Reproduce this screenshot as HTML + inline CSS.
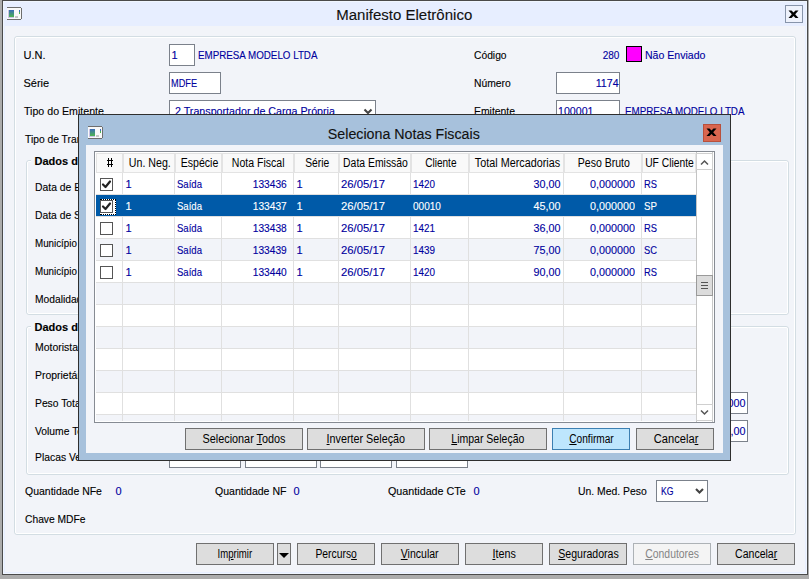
<!DOCTYPE html>
<html><head><meta charset="utf-8"><style>
html,body{margin:0;padding:0;}
body{width:809px;height:579px;overflow:hidden;position:relative;background:#acacac;font-family:"Liberation Sans",sans-serif;}
.r{position:absolute;box-sizing:border-box;}
.t{position:absolute;white-space:nowrap;font-family:"Liberation Sans",sans-serif;-webkit-text-stroke:0.12px currentColor;}
u{text-decoration:underline;text-underline-offset:1px;}
</style></head><body>
<div class="r" style="left:0px;top:0px;width:809px;height:579px;background:#acacac;"></div>
<div class="r" style="left:2px;top:0px;width:806px;height:575px;background:#4a4a4a;"></div>
<div class="r" style="left:3px;top:1px;width:804px;height:573px;background:#f0f6ff;"></div>
<div class="r" style="left:4px;top:2px;width:802px;height:571px;background:#e7eeff;"></div>
<div class="r" style="left:5px;top:26px;width:800px;height:546px;background:#f2f4f9;"></div>
<svg class="r" style="left:7px;top:7px" width="15" height="13" viewBox="0 0 15 13" shape-rendering="crispEdges"><defs><linearGradient id="ig" x1="0" y1="0" x2="0" y2="1"><stop offset="0" stop-color="#3b6bb8"/><stop offset="1" stop-color="#4db54f"/></linearGradient></defs><rect x="0" y="1" width="14" height="11" fill="#f9f9f9"/><rect x="0" y="0" width="14" height="1" fill="#6e6e6e"/><rect x="0" y="12" width="14" height="1" fill="#6e6e6e"/><rect x="14" y="1" width="1" height="11" fill="#6e6e6e"/><rect x="1" y="3" width="6" height="8" fill="#c9c3e6"/><rect x="2" y="3" width="5" height="7" fill="url(#ig)"/><rect x="12" y="3" width="1" height="2" fill="#3b6bb8"/><rect x="12" y="5" width="1" height="2" fill="#4db54f"/><rect x="8" y="9" width="3" height="2" fill="#c8c8c8"/></svg>
<div class="t" style="left:334.27px;top:6px;width:142.47px;font-size:15.50px;line-height:17px;color:#111;transform:scaleX(0.9682);transform-origin:center top;">Manifesto Eletrônico</div>
<div class="r" style="left:785px;top:5px;width:18px;height:18px;background:#eef2fc;border:1px solid #8794aa;"></div>
<svg class="r" style="left:788px;top:10px" width="11" height="9" viewBox="0 0 11 9"><path d="M0.5 0.5 H3.5 L5.5 2.6 L7.5 0.5 H10.5 L7.2 4.3 L10.5 8 H7.5 L5.5 5.9 L3.5 8 H0.5 L3.8 4.3 Z" fill="#000"/></svg>
<div class="r" style="left:14px;top:36px;width:782px;height:499px;border:1px solid #d3dde3;border-radius:3px;"></div>
<div class="r" style="left:15px;top:37px;width:780px;height:497px;border:1px solid #ffffff;border-radius:2px;"></div>
<div class="r" style="left:26px;top:160px;width:763px;height:155px;border:1px solid #d3dde3;border-radius:3px;"></div>
<div class="r" style="left:27px;top:161px;width:761px;height:153px;border:1px solid #ffffff;border-radius:2px;"></div>
<div class="r" style="left:31px;top:156px;width:60px;height:11px;background:#f2f4f9;"></div>
<div class="r" style="left:26px;top:326px;width:763px;height:149px;border:1px solid #d3dde3;border-radius:3px;"></div>
<div class="r" style="left:27px;top:327px;width:761px;height:147px;border:1px solid #ffffff;border-radius:2px;"></div>
<div class="r" style="left:31px;top:322px;width:60px;height:11px;background:#f2f4f9;"></div>
<div class="t" style="left:23.50px;top:49px;width:24.00px;font-size:11.00px;line-height:13px;color:#000000;">U.N.</div>
<div class="t" style="left:23.50px;top:77px;width:27.69px;font-size:11.00px;line-height:13px;color:#000000;">Série</div>
<div class="t" style="left:23.50px;top:105px;width:84.81px;font-size:11.00px;line-height:13px;color:#000000;transform:scaleX(0.9660);transform-origin:left top;">Tipo do Emitente</div>
<div class="t" style="left:24.50px;top:133px;width:93.98px;font-size:11.00px;line-height:13px;color:#000000;transform:scaleX(0.9349);transform-origin:left top;">Tipo de Transporte</div>
<div class="t" style="left:34.50px;top:155px;width:88.78px;font-size:11.00px;line-height:13px;color:#000000;font-weight:bold;">Dados do MDF-e</div>
<div class="t" style="left:34.50px;top:181px;width:85.81px;font-size:11.00px;line-height:13px;color:#000000;transform:scaleX(0.9426);transform-origin:left top;">Data de Emissão</div>
<div class="t" style="left:34.50px;top:209px;width:72.41px;font-size:11.00px;line-height:13px;color:#000000;transform:scaleX(0.9374);transform-origin:left top;">Data de Saída</div>
<div class="t" style="left:34.50px;top:237px;width:122.50px;font-size:11.00px;line-height:13px;color:#000000;transform:scaleX(0.8900);transform-origin:left top;">Município Carregamento</div>
<div class="t" style="left:34.50px;top:265px;width:139.62px;font-size:11.00px;line-height:13px;color:#000000;transform:scaleX(0.8900);transform-origin:left top;">Município Descarregamento</div>
<div class="t" style="left:34.50px;top:293px;width:58.91px;font-size:11.00px;line-height:13px;color:#000000;transform:scaleX(0.9314);transform-origin:left top;">Modalidade</div>
<div class="t" style="left:34.50px;top:321px;width:93.73px;font-size:11.00px;line-height:13px;color:#000000;font-weight:bold;">Dados do Veículo</div>
<div class="t" style="left:34.50px;top:341px;width:47.25px;font-size:11.00px;line-height:13px;color:#000000;transform:scaleX(0.9503);transform-origin:left top;">Motorista</div>
<div class="t" style="left:34.50px;top:369px;width:58.88px;font-size:11.00px;line-height:13px;color:#000000;transform:scaleX(0.9495);transform-origin:left top;">Proprietário</div>
<div class="t" style="left:34.50px;top:397px;width:53.20px;font-size:11.00px;line-height:13px;color:#000000;transform:scaleX(0.9374);transform-origin:left top;">Peso Total</div>
<div class="t" style="left:34.50px;top:425px;width:64.81px;font-size:11.00px;line-height:13px;color:#000000;transform:scaleX(0.9393);transform-origin:left top;">Volume Total</div>
<div class="t" style="left:34.50px;top:451px;width:74.20px;font-size:11.00px;line-height:13px;color:#000000;transform:scaleX(0.9418);transform-origin:left top;">Placas Veículo</div>
<div class="r" style="left:169px;top:44px;width:26px;height:22px;background:#ffffff;border:1px solid #7b818b;"></div>
<div class="t" style="left:171.50px;top:49px;width:8.12px;font-size:11.00px;line-height:13px;color:#00009e;">1</div>
<div class="t" style="left:197.50px;top:49px;width:136.33px;font-size:11.00px;line-height:13px;color:#00009e;transform:scaleX(0.8896);transform-origin:left top;">EMPRESA MODELO LTDA</div>
<div class="r" style="left:169px;top:72px;width:52px;height:22px;background:#ffffff;border:1px solid #7b818b;"></div>
<div class="t" style="left:170.50px;top:77px;width:33.16px;font-size:11.00px;line-height:13px;color:#00009e;transform:scaleX(0.8345);transform-origin:left top;">MDFE</div>
<div class="r" style="left:169px;top:100px;width:207px;height:22px;background:#ffffff;border:1px solid #7b818b;"></div>
<div class="t" style="left:174.50px;top:105px;width:166.58px;font-size:11.00px;line-height:13px;color:#00009e;transform:scaleX(0.9722);transform-origin:left top;">2 Transportador de Carga Própria</div>
<svg class="r" style="left:363px;top:108px" width="10" height="7" viewBox="0 0 10 7"><path d="M1.5 1.5 L5 5 L8.5 1.5" fill="none" stroke="#444" stroke-width="2.1"/></svg>
<div class="t" style="left:473.50px;top:49px;width:36.88px;font-size:11.00px;line-height:13px;color:#000000;transform:scaleX(0.9348);transform-origin:left top;">Código</div>
<div class="t" style="left:600.83px;top:49px;width:18.38px;font-size:11.00px;line-height:13px;color:#00009e;transform:scaleX(0.9088);transform-origin:right top;">280</div>
<div class="r" style="left:626px;top:46px;width:16px;height:16px;background:#ff00ff;border:1px solid #000000;"></div>
<div class="t" style="left:644.50px;top:49px;width:65.03px;font-size:11.00px;line-height:13px;color:#00009e;transform:scaleX(0.9598);transform-origin:left top;">Não Enviado</div>
<div class="t" style="left:473.50px;top:77px;width:41.12px;font-size:11.00px;line-height:13px;color:#000000;transform:scaleX(0.9380);transform-origin:left top;">Número</div>
<div class="r" style="left:556px;top:72px;width:64px;height:22px;background:#ffffff;border:1px solid #7b818b;"></div>
<div class="t" style="left:594.51px;top:77px;width:23.69px;font-size:11.00px;line-height:13px;color:#00009e;transform:scaleX(0.9710);transform-origin:right top;">1174</div>
<div class="t" style="left:473.50px;top:105px;width:45.44px;font-size:11.00px;line-height:13px;color:#000000;transform:scaleX(0.9439);transform-origin:left top;">Emitente</div>
<div class="r" style="left:556px;top:100px;width:64px;height:22px;background:#ffffff;border:1px solid #7b818b;"></div>
<div class="t" style="left:558.00px;top:105px;width:38.75px;font-size:11.00px;line-height:13px;color:#00009e;transform:scaleX(0.9660);transform-origin:left top;">100001</div>
<div class="t" style="left:624.50px;top:105px;width:136.33px;font-size:11.00px;line-height:13px;color:#00009e;transform:scaleX(0.8896);transform-origin:left top;">EMPRESA MODELO LTDA</div>
<div class="r" style="left:700px;top:392px;width:48px;height:22px;background:#ffffff;border:1px solid #7b818b;"></div>
<div class="t" style="left:717.64px;top:397px;width:27.56px;font-size:11.00px;line-height:13px;color:#00009e;transform:scaleX(0.9796);transform-origin:right top;">0,000</div>
<div class="r" style="left:700px;top:420px;width:48px;height:22px;background:#ffffff;border:1px solid #7b818b;"></div>
<div class="t" style="left:723.76px;top:425px;width:21.44px;font-size:11.00px;line-height:13px;color:#00009e;transform:scaleX(0.9796);transform-origin:right top;">0,00</div>
<div class="r" style="left:169px;top:446px;width:72px;height:22px;background:#ffffff;border:1px solid #7b818b;"></div>
<div class="r" style="left:245px;top:446px;width:72px;height:22px;background:#ffffff;border:1px solid #7b818b;"></div>
<div class="r" style="left:320px;top:446px;width:72px;height:22px;background:#ffffff;border:1px solid #7b818b;"></div>
<div class="r" style="left:396px;top:446px;width:72px;height:22px;background:#ffffff;border:1px solid #7b818b;"></div>
<div class="t" style="left:24.50px;top:485px;width:82.78px;font-size:11.00px;line-height:13px;color:#000000;transform:scaleX(0.9532);transform-origin:left top;">Quantidade NFe</div>
<div class="t" style="left:115.50px;top:485px;width:8.12px;font-size:11.00px;line-height:13px;color:#00009e;">0</div>
<div class="t" style="left:214.50px;top:485px;width:76.66px;font-size:11.00px;line-height:13px;color:#000000;transform:scaleX(0.9577);transform-origin:left top;">Quantidade NF</div>
<div class="t" style="left:293.50px;top:485px;width:8.12px;font-size:11.00px;line-height:13px;color:#00009e;">0</div>
<div class="t" style="left:387.50px;top:485px;width:81.56px;font-size:11.00px;line-height:13px;color:#000000;transform:scaleX(0.9766);transform-origin:left top;">Quantidade CTe</div>
<div class="t" style="left:473.50px;top:485px;width:8.12px;font-size:11.00px;line-height:13px;color:#00009e;">0</div>
<div class="t" style="left:577.50px;top:485px;width:74.81px;font-size:11.00px;line-height:13px;color:#000000;transform:scaleX(0.9449);transform-origin:left top;">Un. Med. Peso</div>
<div class="r" style="left:656px;top:480px;width:52px;height:22px;background:#ffffff;border:1px solid #7b818b;"></div>
<div class="t" style="left:660.50px;top:485px;width:17.91px;font-size:11.00px;line-height:13px;color:#00009e;transform:scaleX(0.7859);transform-origin:left top;">KG</div>
<svg class="r" style="left:695px;top:488px" width="9" height="6" viewBox="0 0 9 6"><path d="M1 1 L4.5 4.5 L8 1" fill="none" stroke="#444" stroke-width="2.1"/></svg>
<div class="t" style="left:24.50px;top:513px;width:66.81px;font-size:11.00px;line-height:13px;color:#000000;transform:scaleX(0.9335);transform-origin:left top;">Chave MDFe</div>
<div class="r" style="left:196px;top:543px;width:78px;height:22px;background:#dddddd;border:1px solid #707070;"></div>
<div class="t" style="left:213.33px;top:548px;width:45.34px;font-size:12.00px;line-height:13px;color:#000000;transform:scaleX(0.7960);transform-origin:center top;-webkit-text-stroke:0;">Im<u>p</u>rimir</div>
<div class="r" style="left:277px;top:543px;width:14px;height:22px;background:#dddddd;border:1px solid #707070;"></div>
<svg class="r" style="left:279px;top:553px" width="10" height="6" viewBox="0 0 10 6"><path d="M0 0 L10 0 L5 5 Z" fill="#000"/></svg>
<div class="r" style="left:297px;top:543px;width:78px;height:22px;background:#dddddd;border:1px solid #707070;"></div>
<div class="t" style="left:311.99px;top:548px;width:50.02px;font-size:12.00px;line-height:13px;color:#000000;transform:scaleX(0.8622);transform-origin:center top;-webkit-text-stroke:0;">Percurs<u>o</u></div>
<div class="r" style="left:381px;top:543px;width:78px;height:22px;background:#dddddd;border:1px solid #707070;"></div>
<div class="t" style="left:398.43px;top:548px;width:45.14px;font-size:12.00px;line-height:13px;color:#000000;transform:scaleX(0.8762);transform-origin:center top;-webkit-text-stroke:0;"><u>V</u>incular</div>
<div class="r" style="left:465px;top:543px;width:78px;height:22px;background:#dddddd;border:1px solid #707070;"></div>
<div class="t" style="left:491.00px;top:548px;width:28.00px;font-size:12.00px;line-height:13px;color:#000000;transform:scaleX(0.8962);transform-origin:center top;-webkit-text-stroke:0;"><u>I</u>tens</div>
<div class="r" style="left:549px;top:543px;width:78px;height:22px;background:#dddddd;border:1px solid #707070;"></div>
<div class="t" style="left:553.65px;top:548px;width:70.70px;font-size:12.00px;line-height:13px;color:#000000;transform:scaleX(0.8806);transform-origin:center top;-webkit-text-stroke:0;"><u>S</u>eguradoras</div>
<div class="r" style="left:633px;top:543px;width:78px;height:22px;background:#f4f4f4;border:1px solid #adb2b6;"></div>
<div class="t" style="left:640.98px;top:548px;width:64.03px;font-size:12.00px;line-height:13px;color:#858585;transform:scaleX(0.8673);transform-origin:center top;-webkit-text-stroke:0;"><u>C</u>ondutores</div>
<div class="r" style="left:717px;top:543px;width:78px;height:22px;background:#dddddd;border:1px solid #707070;"></div>
<div class="t" style="left:731.98px;top:548px;width:50.03px;font-size:12.00px;line-height:13px;color:#000000;transform:scaleX(0.8786);transform-origin:center top;-webkit-text-stroke:0;">Cancela<u>r</u></div>
<div class="r" style="left:78px;top:114px;width:653px;height:347px;background:#2e2e2e;"></div>
<div class="r" style="left:79px;top:115px;width:651px;height:345px;background:#a7c1dc;"></div>
<div class="r" style="left:86px;top:145px;width:637px;height:308px;background:#f2f4f9;"></div>
<svg class="r" style="left:88px;top:126px" width="15" height="13" viewBox="0 0 15 13" shape-rendering="crispEdges"><rect x="0" y="1" width="14" height="11" fill="#f9f9f9"/><rect x="0" y="0" width="14" height="1" fill="#6e6e6e"/><rect x="0" y="12" width="14" height="1" fill="#6e6e6e"/><rect x="14" y="1" width="1" height="11" fill="#6e6e6e"/><rect x="1" y="3" width="6" height="8" fill="#c9c3e6"/><rect x="2" y="3" width="5" height="7" fill="url(#ig)"/><rect x="12" y="3" width="1" height="2" fill="#3b6bb8"/><rect x="12" y="5" width="1" height="2" fill="#4db54f"/><rect x="8" y="9" width="3" height="2" fill="#c8c8c8"/></svg>
<div class="t" style="left:320.78px;top:125px;width:167.44px;font-size:15.50px;line-height:17px;color:#111;transform:scaleX(0.9188);transform-origin:center top;">Seleciona Notas Fiscais</div>
<div class="r" style="left:703px;top:124px;width:18px;height:18px;background:#d9664f;border:1px solid #b8503c;"></div>
<svg class="r" style="left:706px;top:128px" width="11" height="9" viewBox="0 0 11 9"><path d="M0.5 0.5 H3.5 L5.5 2.6 L7.5 0.5 H10.5 L7.2 4.3 L10.5 8 H7.5 L5.5 5.9 L3.5 8 H0.5 L3.8 4.3 Z" fill="#000"/></svg>
<div class="r" style="left:94px;top:151px;width:621px;height:272px;background:#ffffff;border:1px solid #868b93;"></div>
<div class="r" style="left:96px;top:173px;width:600px;height:21px;background:#ffffff;"></div>
<div class="r" style="left:96px;top:194px;width:600px;height:1px;background:#e0e0e0;"></div>
<div class="r" style="left:96px;top:195px;width:600px;height:21px;background:#f2f4f9;"></div>
<div class="r" style="left:96px;top:216px;width:600px;height:1px;background:#e0e0e0;"></div>
<div class="r" style="left:96px;top:217px;width:600px;height:21px;background:#ffffff;"></div>
<div class="r" style="left:96px;top:238px;width:600px;height:1px;background:#e0e0e0;"></div>
<div class="r" style="left:96px;top:239px;width:600px;height:21px;background:#f2f4f9;"></div>
<div class="r" style="left:96px;top:260px;width:600px;height:1px;background:#e0e0e0;"></div>
<div class="r" style="left:96px;top:261px;width:600px;height:21px;background:#ffffff;"></div>
<div class="r" style="left:96px;top:282px;width:600px;height:1px;background:#e0e0e0;"></div>
<div class="r" style="left:96px;top:283px;width:600px;height:21px;background:#f2f4f9;"></div>
<div class="r" style="left:96px;top:304px;width:600px;height:1px;background:#e0e0e0;"></div>
<div class="r" style="left:96px;top:305px;width:600px;height:21px;background:#ffffff;"></div>
<div class="r" style="left:96px;top:326px;width:600px;height:1px;background:#e0e0e0;"></div>
<div class="r" style="left:96px;top:327px;width:600px;height:21px;background:#f2f4f9;"></div>
<div class="r" style="left:96px;top:348px;width:600px;height:1px;background:#e0e0e0;"></div>
<div class="r" style="left:96px;top:349px;width:600px;height:21px;background:#ffffff;"></div>
<div class="r" style="left:96px;top:370px;width:600px;height:1px;background:#e0e0e0;"></div>
<div class="r" style="left:96px;top:371px;width:600px;height:21px;background:#f2f4f9;"></div>
<div class="r" style="left:96px;top:392px;width:600px;height:1px;background:#e0e0e0;"></div>
<div class="r" style="left:96px;top:393px;width:600px;height:21px;background:#ffffff;"></div>
<div class="r" style="left:96px;top:414px;width:600px;height:1px;background:#e0e0e0;"></div>
<div class="r" style="left:96px;top:415px;width:600px;height:6px;background:#f2f4f9;"></div>
<div class="r" style="left:122px;top:173px;width:1px;height:248px;background:#e0e0e0;"></div>
<div class="r" style="left:174px;top:173px;width:1px;height:248px;background:#e0e0e0;"></div>
<div class="r" style="left:221px;top:173px;width:1px;height:248px;background:#e0e0e0;"></div>
<div class="r" style="left:293px;top:173px;width:1px;height:248px;background:#e0e0e0;"></div>
<div class="r" style="left:338px;top:173px;width:1px;height:248px;background:#e0e0e0;"></div>
<div class="r" style="left:410px;top:173px;width:1px;height:248px;background:#e0e0e0;"></div>
<div class="r" style="left:468px;top:173px;width:1px;height:248px;background:#e0e0e0;"></div>
<div class="r" style="left:563px;top:173px;width:1px;height:248px;background:#e0e0e0;"></div>
<div class="r" style="left:641px;top:173px;width:1px;height:248px;background:#e0e0e0;"></div>
<div class="r" style="left:95px;top:152px;width:601px;height:21px;background:#ffffff;"></div>
<div class="r" style="left:96px;top:153px;width:27px;height:20px;background:#f9f9f9;border:1px solid #e3e3e3;"></div>
<div class="r" style="left:123px;top:153px;width:52px;height:20px;background:#f9f9f9;border:1px solid #e3e3e3;"></div>
<div class="r" style="left:175px;top:153px;width:47px;height:20px;background:#f9f9f9;border:1px solid #e3e3e3;"></div>
<div class="r" style="left:222px;top:153px;width:72px;height:20px;background:#f9f9f9;border:1px solid #e3e3e3;"></div>
<div class="r" style="left:294px;top:153px;width:45px;height:20px;background:#f9f9f9;border:1px solid #e3e3e3;"></div>
<div class="r" style="left:339px;top:153px;width:72px;height:20px;background:#f9f9f9;border:1px solid #e3e3e3;"></div>
<div class="r" style="left:411px;top:153px;width:58px;height:20px;background:#f9f9f9;border:1px solid #e3e3e3;"></div>
<div class="r" style="left:469px;top:153px;width:95px;height:20px;background:#f9f9f9;border:1px solid #e3e3e3;"></div>
<div class="r" style="left:564px;top:153px;width:78px;height:20px;background:#f9f9f9;border:1px solid #e3e3e3;"></div>
<div class="r" style="left:642px;top:153px;width:54px;height:20px;background:#f9f9f9;border:1px solid #e3e3e3;"></div>
<div class="r" style="left:108px;top:158px;width:1px;height:9px;background:#000;"></div>
<div class="r" style="left:111px;top:158px;width:1px;height:9px;background:#000;"></div>
<div class="r" style="left:107px;top:160px;width:6px;height:1px;background:#000;"></div>
<div class="r" style="left:107px;top:164px;width:6px;height:1px;background:#000;"></div>
<div class="t" style="left:125.83px;top:157px;width:49.34px;font-size:12.00px;line-height:13px;color:#000000;transform:scaleX(0.8871);transform-origin:center top;-webkit-text-stroke:0;">Un. Neg.</div>
<div class="t" style="left:177.66px;top:157px;width:44.69px;font-size:12.00px;line-height:13px;color:#000000;transform:scaleX(0.8808);transform-origin:center top;-webkit-text-stroke:0;">Espécie</div>
<div class="t" style="left:228.49px;top:157px;width:62.02px;font-size:12.00px;line-height:13px;color:#000000;transform:scaleX(0.8781);transform-origin:center top;-webkit-text-stroke:0;">Nota Fiscal</div>
<div class="t" style="left:302.99px;top:157px;width:30.02px;font-size:12.00px;line-height:13px;color:#000000;transform:scaleX(0.8567);transform-origin:center top;-webkit-text-stroke:0;">Série</div>
<div class="t" style="left:338.16px;top:157px;width:76.69px;font-size:12.00px;line-height:13px;color:#000000;transform:scaleX(0.8676);transform-origin:center top;-webkit-text-stroke:0;">Data Emissão</div>
<div class="t" style="left:421.82px;top:157px;width:39.36px;font-size:12.00px;line-height:13px;color:#000000;transform:scaleX(0.8405);transform-origin:center top;-webkit-text-stroke:0;">Cliente</div>
<div class="t" style="left:469.65px;top:157px;width:96.70px;font-size:12.00px;line-height:13px;color:#000000;transform:scaleX(0.8997);transform-origin:center top;-webkit-text-stroke:0;">Total Mercadorias</div>
<div class="t" style="left:573.83px;top:157px;width:61.34px;font-size:12.00px;line-height:13px;color:#000000;transform:scaleX(0.8779);transform-origin:center top;-webkit-text-stroke:0;">Peso Bruto</div>
<div class="t" style="left:641.16px;top:157px;width:58.69px;font-size:12.00px;line-height:13px;color:#000000;transform:scaleX(0.8591);transform-origin:center top;-webkit-text-stroke:0;">UF Cliente</div>
<div class="r" style="left:96px;top:195px;width:600px;height:21px;background:#005aa8;"></div>
<div class="r" style="left:100px;top:178px;width:13px;height:13px;background:#ffffff;border:1px solid #555555;"></div>
<svg class="r" style="left:100px;top:178px" width="13" height="13" viewBox="0 0 13 13"><path d="M3 6.5 L5.5 9 L10 3.5" fill="none" stroke="#222" stroke-width="2.2" stroke-linecap="round" stroke-linejoin="round"/></svg>
<div class="t" style="left:125.50px;top:178px;width:8.12px;font-size:11.00px;line-height:13px;color:#00009e;">1</div>
<div class="t" style="left:176.50px;top:178px;width:30.78px;font-size:11.00px;line-height:13px;color:#00009e;transform:scaleX(0.8686);transform-origin:left top;">Saída</div>
<div class="t" style="left:250.45px;top:178px;width:36.75px;font-size:11.00px;line-height:13px;color:#00009e;transform:scaleX(0.9252);transform-origin:right top;">133436</div>
<div class="t" style="left:296.50px;top:178px;width:8.12px;font-size:11.00px;line-height:13px;color:#00009e;">1</div>
<div class="t" style="left:340.50px;top:178px;width:44.88px;font-size:11.00px;line-height:13px;color:#00009e;transform:scaleX(1.0262);transform-origin:left top;">26/05/17</div>
<div class="t" style="left:412.50px;top:178px;width:26.50px;font-size:11.00px;line-height:13px;color:#00009e;transform:scaleX(0.8980);transform-origin:left top;">1420</div>
<div class="t" style="left:532.64px;top:178px;width:27.56px;font-size:11.00px;line-height:13px;color:#00009e;transform:scaleX(0.9796);transform-origin:right top;">30,00</div>
<div class="t" style="left:589.26px;top:178px;width:45.94px;font-size:11.00px;line-height:13px;color:#00009e;transform:scaleX(0.9796);transform-origin:right top;">0,000000</div>
<div class="t" style="left:643.50px;top:178px;width:17.28px;font-size:11.00px;line-height:13px;color:#00009e;transform:scaleX(0.8507);transform-origin:left top;">RS</div>
<div class="r" style="left:100px;top:199px;width:16px;height:16px;background:#ffffff;outline:1px dotted #000;outline-offset:-1px;"></div>
<div class="r" style="left:100px;top:200px;width:13px;height:13px;background:#ffffff;border:1px solid #555555;"></div>
<svg class="r" style="left:100px;top:200px" width="13" height="13" viewBox="0 0 13 13"><path d="M3 6.5 L5.5 9 L10 3.5" fill="none" stroke="#222" stroke-width="2.2" stroke-linecap="round" stroke-linejoin="round"/></svg>
<div class="t" style="left:125.50px;top:200px;width:8.12px;font-size:11.00px;line-height:13px;color:#ffffff;">1</div>
<div class="t" style="left:176.50px;top:200px;width:30.78px;font-size:11.00px;line-height:13px;color:#ffffff;transform:scaleX(0.8686);transform-origin:left top;">Saída</div>
<div class="t" style="left:250.45px;top:200px;width:36.75px;font-size:11.00px;line-height:13px;color:#ffffff;transform:scaleX(0.9252);transform-origin:right top;">133437</div>
<div class="t" style="left:296.50px;top:200px;width:8.12px;font-size:11.00px;line-height:13px;color:#ffffff;">1</div>
<div class="t" style="left:340.50px;top:200px;width:44.88px;font-size:11.00px;line-height:13px;color:#ffffff;transform:scaleX(1.0262);transform-origin:left top;">26/05/17</div>
<div class="t" style="left:412.50px;top:200px;width:32.62px;font-size:11.00px;line-height:13px;color:#ffffff;transform:scaleX(0.9143);transform-origin:left top;">00010</div>
<div class="t" style="left:532.64px;top:200px;width:27.56px;font-size:11.00px;line-height:13px;color:#ffffff;transform:scaleX(0.9796);transform-origin:right top;">45,00</div>
<div class="t" style="left:589.26px;top:200px;width:45.94px;font-size:11.00px;line-height:13px;color:#ffffff;transform:scaleX(0.9796);transform-origin:right top;">0,000000</div>
<div class="t" style="left:643.50px;top:200px;width:16.69px;font-size:11.00px;line-height:13px;color:#ffffff;transform:scaleX(0.8851);transform-origin:left top;">SP</div>
<div class="r" style="left:100px;top:222px;width:13px;height:13px;background:#ffffff;border:1px solid #555555;"></div>
<div class="t" style="left:125.50px;top:222px;width:8.12px;font-size:11.00px;line-height:13px;color:#00009e;">1</div>
<div class="t" style="left:176.50px;top:222px;width:30.78px;font-size:11.00px;line-height:13px;color:#00009e;transform:scaleX(0.8686);transform-origin:left top;">Saída</div>
<div class="t" style="left:250.45px;top:222px;width:36.75px;font-size:11.00px;line-height:13px;color:#00009e;transform:scaleX(0.9252);transform-origin:right top;">133438</div>
<div class="t" style="left:296.50px;top:222px;width:8.12px;font-size:11.00px;line-height:13px;color:#00009e;">1</div>
<div class="t" style="left:340.50px;top:222px;width:44.88px;font-size:11.00px;line-height:13px;color:#00009e;transform:scaleX(1.0262);transform-origin:left top;">26/05/17</div>
<div class="t" style="left:412.50px;top:222px;width:26.50px;font-size:11.00px;line-height:13px;color:#00009e;transform:scaleX(0.8980);transform-origin:left top;">1421</div>
<div class="t" style="left:532.64px;top:222px;width:27.56px;font-size:11.00px;line-height:13px;color:#00009e;transform:scaleX(0.9796);transform-origin:right top;">36,00</div>
<div class="t" style="left:589.26px;top:222px;width:45.94px;font-size:11.00px;line-height:13px;color:#00009e;transform:scaleX(0.9796);transform-origin:right top;">0,000000</div>
<div class="t" style="left:643.50px;top:222px;width:17.28px;font-size:11.00px;line-height:13px;color:#00009e;transform:scaleX(0.8507);transform-origin:left top;">RS</div>
<div class="r" style="left:100px;top:244px;width:13px;height:13px;background:#ffffff;border:1px solid #555555;"></div>
<div class="t" style="left:125.50px;top:244px;width:8.12px;font-size:11.00px;line-height:13px;color:#00009e;">1</div>
<div class="t" style="left:176.50px;top:244px;width:30.78px;font-size:11.00px;line-height:13px;color:#00009e;transform:scaleX(0.8686);transform-origin:left top;">Saída</div>
<div class="t" style="left:250.45px;top:244px;width:36.75px;font-size:11.00px;line-height:13px;color:#00009e;transform:scaleX(0.9252);transform-origin:right top;">133439</div>
<div class="t" style="left:296.50px;top:244px;width:8.12px;font-size:11.00px;line-height:13px;color:#00009e;">1</div>
<div class="t" style="left:340.50px;top:244px;width:44.88px;font-size:11.00px;line-height:13px;color:#00009e;transform:scaleX(1.0262);transform-origin:left top;">26/05/17</div>
<div class="t" style="left:412.50px;top:244px;width:26.50px;font-size:11.00px;line-height:13px;color:#00009e;transform:scaleX(0.8980);transform-origin:left top;">1439</div>
<div class="t" style="left:532.64px;top:244px;width:27.56px;font-size:11.00px;line-height:13px;color:#00009e;transform:scaleX(0.9796);transform-origin:right top;">75,00</div>
<div class="t" style="left:589.26px;top:244px;width:45.94px;font-size:11.00px;line-height:13px;color:#00009e;transform:scaleX(0.9796);transform-origin:right top;">0,000000</div>
<div class="t" style="left:643.50px;top:244px;width:17.28px;font-size:11.00px;line-height:13px;color:#00009e;transform:scaleX(0.8507);transform-origin:left top;">SC</div>
<div class="r" style="left:100px;top:266px;width:13px;height:13px;background:#ffffff;border:1px solid #555555;"></div>
<div class="t" style="left:125.50px;top:266px;width:8.12px;font-size:11.00px;line-height:13px;color:#00009e;">1</div>
<div class="t" style="left:176.50px;top:266px;width:30.78px;font-size:11.00px;line-height:13px;color:#00009e;transform:scaleX(0.8686);transform-origin:left top;">Saída</div>
<div class="t" style="left:250.45px;top:266px;width:36.75px;font-size:11.00px;line-height:13px;color:#00009e;transform:scaleX(0.9252);transform-origin:right top;">133440</div>
<div class="t" style="left:296.50px;top:266px;width:8.12px;font-size:11.00px;line-height:13px;color:#00009e;">1</div>
<div class="t" style="left:340.50px;top:266px;width:44.88px;font-size:11.00px;line-height:13px;color:#00009e;transform:scaleX(1.0262);transform-origin:left top;">26/05/17</div>
<div class="t" style="left:412.50px;top:266px;width:26.50px;font-size:11.00px;line-height:13px;color:#00009e;transform:scaleX(0.8980);transform-origin:left top;">1420</div>
<div class="t" style="left:532.64px;top:266px;width:27.56px;font-size:11.00px;line-height:13px;color:#00009e;transform:scaleX(0.9796);transform-origin:right top;">90,00</div>
<div class="t" style="left:589.26px;top:266px;width:45.94px;font-size:11.00px;line-height:13px;color:#00009e;transform:scaleX(0.9796);transform-origin:right top;">0,000000</div>
<div class="t" style="left:643.50px;top:266px;width:17.28px;font-size:11.00px;line-height:13px;color:#00009e;transform:scaleX(0.8507);transform-origin:left top;">RS</div>
<div class="r" style="left:696px;top:152px;width:18px;height:270px;background:#ffffff;"></div>
<div class="r" style="left:696px;top:152px;width:1px;height:270px;background:#c4c4c4;"></div>
<div class="r" style="left:712px;top:152px;width:1px;height:270px;background:#c8c8c8;"></div>
<div class="r" style="left:696px;top:153px;width:17px;height:17px;background:#ffffff;border:1px solid #cfcfcf;"></div>
<svg class="r" style="left:700px;top:159px" width="9" height="7" viewBox="0 0 9 7"><path d="M1 5.5 L4.5 2 L8 5.5" fill="none" stroke="#555" stroke-width="1.5"/></svg>
<div class="r" style="left:696px;top:404px;width:17px;height:17px;background:#ffffff;border:1px solid #cfcfcf;"></div>
<svg class="r" style="left:700px;top:409px" width="9" height="7" viewBox="0 0 9 7"><path d="M1 1.5 L4.5 5 L8 1.5" fill="none" stroke="#555" stroke-width="1.5"/></svg>
<div class="r" style="left:696px;top:275px;width:17px;height:21px;background:#dcdcdc;border:1px solid #9a9a9a;"></div>
<div class="r" style="left:701px;top:282px;width:7px;height:1px;background:#555555;"></div>
<div class="r" style="left:701px;top:285px;width:7px;height:1px;background:#555555;"></div>
<div class="r" style="left:701px;top:288px;width:7px;height:1px;background:#555555;"></div>
<div class="r" style="left:185px;top:428px;width:118px;height:22px;background:#dddddd;border:1px solid #707070;"></div>
<div class="t" style="left:198.09px;top:433px;width:93.83px;font-size:12.00px;line-height:13px;color:#000000;transform:scaleX(0.9039);transform-origin:center top;-webkit-text-stroke:0;">Selecionar <u>T</u>odos</div>
<div class="r" style="left:307px;top:428px;width:118px;height:22px;background:#dddddd;border:1px solid #707070;"></div>
<div class="t" style="left:322.32px;top:433px;width:89.36px;font-size:12.00px;line-height:13px;color:#000000;transform:scaleX(0.8974);transform-origin:center top;-webkit-text-stroke:0;"><u>I</u>nverter Seleção</div>
<div class="r" style="left:429px;top:428px;width:118px;height:22px;background:#dddddd;border:1px solid #707070;"></div>
<div class="t" style="left:446.31px;top:433px;width:85.38px;font-size:12.00px;line-height:13px;color:#000000;transform:scaleX(0.8756);transform-origin:center top;-webkit-text-stroke:0;"><u>L</u>impar Seleção</div>
<div class="r" style="left:552px;top:428px;width:78px;height:22px;background:#bee6fd;border:1px solid #3c7fb1;"></div>
<div class="t" style="left:564.66px;top:433px;width:54.69px;font-size:12.00px;line-height:13px;color:#000000;transform:scaleX(0.8446);transform-origin:center top;-webkit-text-stroke:0;"><u>C</u>onfirmar</div>
<div class="r" style="left:636px;top:428px;width:78px;height:22px;background:#dddddd;border:1px solid #707070;"></div>
<div class="t" style="left:651.98px;top:433px;width:50.03px;font-size:12.00px;line-height:13px;color:#000000;transform:scaleX(0.9265);transform-origin:center top;-webkit-text-stroke:0;">Cancela<u>r</u></div>
</body></html>
